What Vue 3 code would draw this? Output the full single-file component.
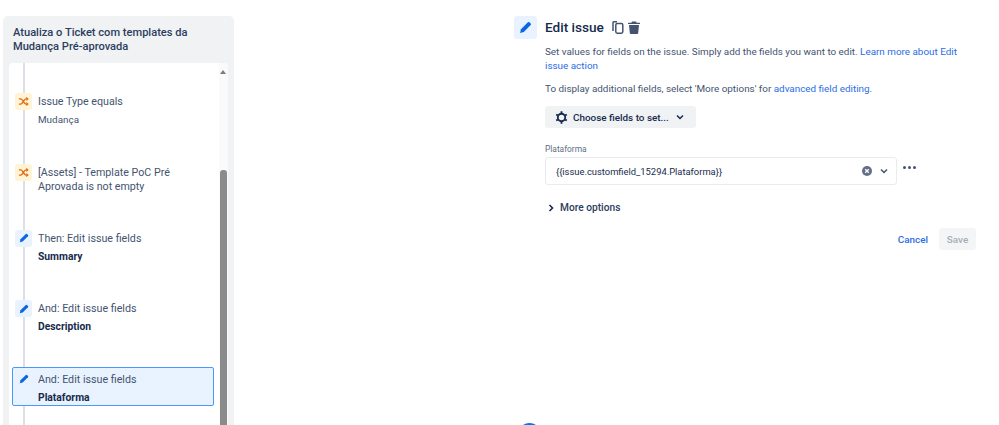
<script setup>
const fieldValue = '{' + '{issue.customfield_15294.Plataforma}' + '}'
const rules = [
  { kind: 'cond', title: 'Issue Type equals', sub: 'Mudança' },
  { kind: 'cond', title: '[Assets] - Template PoC Pré Aprovada is not empty' },
  { kind: 'edit', title: 'Then: Edit issue fields', sub: 'Summary', bold: true },
  { kind: 'edit', title: 'And: Edit issue fields', sub: 'Description', bold: true },
  { kind: 'edit', title: 'And: Edit issue fields', sub: 'Plataforma', bold: true, active: true },
]
</script>

<template>
  <div class="page">
    <aside class="side">
      <h2 class="side-title">Atualiza o Ticket com templates da Mudança Pré-aprovada</h2>
      <div class="panel">
        <div class="timeline">
          <div v-for="(r, i) in rules" :key="i" class="rule" :class="{ active: r.active, two: !r.sub }">
            <span class="badge" :class="r.kind">
              <svg v-if="r.kind === 'cond'" width="11" height="11" viewBox="0 0 12 12" fill="none" stroke="#e56910" stroke-width="1.5">
                <path d="M1 3.2h2.2c1.8 0 3.4 5.6 5.4 5.6H10M1 8.8h2.2c1.8 0 3.4-5.600 5.4-5.600H10" />
                <path d="M9 1.6l1.8 1.6L9 4.8M9 7.2l1.8 1.6L9 10.4" stroke-width="1.2" />
              </svg>
              <svg v-else width="10" height="10" viewBox="0 0 12 12" fill="#0c66e4">
                <path d="M8.2 1.2a1 1 0 0 1 1.4 0l1.2 1.2a1 1 0 0 1 0 1.4L4.4 10.2 1 11l.8-3.4z" />
              </svg>
            </span>
            <div class="rule-text">
              <div class="rule-title">{{ r.title }}</div>
              <div v-if="r.sub" class="rule-sub" :class="{ bold: r.bold }">{{ r.sub }}</div>
            </div>
          </div>
        </div>
        <div class="scrollbar">
          <span class="arrow"></span>
          <span class="thumb"></span>
        </div>
      </div>
    </aside>

    <main class="main">
      <header class="head">
        <span class="head-icon">
          <svg width="13" height="13" viewBox="0 0 12 12" fill="#0c66e4">
            <path d="M8.2 1.2a1 1 0 0 1 1.4 0l1.2 1.2a1 1 0 0 1 0 1.4L4.4 10.2 1 11l.8-3.4z" />
          </svg>
        </span>
        <h1 class="head-title">Edit issue</h1>
        <svg class="copy" width="12" height="13" viewBox="0 0 12 13" fill="none" stroke="#44546f" stroke-width="1.5">
          <path d="M1 10V1.800a1 1 0 0 1 1-1h3" />
          <rect x="3.800" y="2.600" width="7" height="9.600" rx="1.400" />
        </svg>
        <svg class="trash" width="12" height="13" viewBox="0 0 12 13" fill="#44546f">
          <path d="M4 .6h4l.6 1.200h2.900a.5.5 0 0 1 .5.5v.7H0v-.7a.5.5 0 0 1 .5-.5h2.900zM1 4h10l-.8 8a1 1 0 0 1-1 .9H2.800a1 1 0 0 1-1-.9z" />
        </svg>
      </header>

      <div class="body">
        <p class="para">Set values for fields on the issue. Simply add the fields you want to edit. <a class="link">Learn more about Edit issue action</a></p>
        <p class="para second">To display additional fields, select 'More options' for <a class="link">advanced field editing</a>.</p>

        <button class="choose">
          <svg width="13" height="13" viewBox="0 0 14 14" fill="none" stroke="#172b4d">
            <circle cx="7" cy="7" r="4" stroke-width="2" />
            <path stroke-width="2" d="M7 .4v2M7 11.600v2M1.300 3.700l1.700 1M11 9.300l1.700 1M1.300 10.300l1.700-1M11 4.700l1.700-1" />
          </svg>
          <span class="choose-text">Choose fields to set...</span>
          <svg class="chev" width="8" height="6" viewBox="0 0 8 6" fill="none" stroke="#172b4d" stroke-width="1.500"><path d="M1 1.500l3 3 3-3" /></svg>
        </button>

        <label class="label">Plataforma</label>
        <div class="field-row">
          <div class="input">
            <span class="value">{{ fieldValue }}</span>
            <svg class="clear" width="10" height="10" viewBox="0 0 10 10">
              <circle cx="5" cy="5" r="5" fill="#626f86" />
              <path d="M3.200 3.200l3.600 3.600M6.800 3.200l-3.600 3.600" stroke="#fff" stroke-width="1.300" />
            </svg>
            <svg class="chev2" width="8" height="6" viewBox="0 0 8 6" fill="none" stroke="#44546f" stroke-width="1.500"><path d="M1 1.500l3 3 3-3" /></svg>
          </div>
          <div class="dots"><i></i><i></i><i></i></div>
        </div>

        <div class="more">
          <svg width="6" height="8" viewBox="0 0 6 8" fill="none" stroke="#172b4d" stroke-width="1.600"><path d="M1.500 1l3 3-3 3" /></svg>
          <span>More options</span>
        </div>

        <div class="actions">
          <a class="cancel">Cancel</a>
          <button class="save">Save</button>
        </div>
      </div>
    </main>

    <span class="fab"></span>
  </div>
</template>

<style>
html, body { margin: 0; background: #fff; }
</style>

<style scoped>
.page {
  position: relative;
  display: flex;
  align-items: flex-start;
  width: 999px;
  height: 425px;
  overflow: hidden;
  font-family: Roboto, "Noto Sans", sans-serif;
  color: #44546f;
}
.side {
  box-sizing: border-box;
  flex: none;
  width: 231px;
  height: 420px;
  margin: 16px 0 0 3px;
  padding: 10px 6px 0;
  background: #f1f2f4;
  border-radius: 5px 5px 0 0;
}
.side-title {
  margin: 0 0 9px 4px;
  font-size: 11.100px;
  line-height: 14px;
  font-weight: 500;
  color: #2c3e5d;
}
.panel {
  display: flex;
  height: 400px;
  background: #fff;
  border-radius: 4px 4px 0 0;
  overflow: hidden;
}
.timeline {
  flex: 1;
  box-sizing: border-box;
  position: relative;
  padding: 26px 5px 0 3px;
}
.timeline::before {
  content: "";
  position: absolute;
  left: 14px;
  top: 0;
  bottom: 0;
  width: 1.500px;
  background: #dcdfe6;
}
.rule {
  position: relative;
  display: flex;
  gap: 6px;
  height: 39px;
  margin-bottom: 31.500px;
  box-sizing: border-box;
  padding: 3px 0 0 2px;
  border: 1px solid transparent;
}
.rule.two { margin-bottom: 22px; height: 44px; }
.rule.active {
  background: #e9f2ff;
  border: 1.500px solid #4a97ff;
  border-radius: 2px;
}
.badge {
  flex: none;
  display: flex;
  align-items: center;
  justify-content: center;
  width: 17px;
  height: 17px;
  border-radius: 3px;
}
.badge.cond { background: #fff4d6; }
.badge.edit { background: #e9f2ff; }
.rule-text { padding-top: 2px; }
.rule-title {
  font-size: 10.700px;
  line-height: 14px;
  color: #44546f;
}
.rule-sub {
  margin-top: 4px;
  font-size: 9.900px;
  line-height: 14px;
}
.rule-sub.bold { font-size: 10.300px; font-weight: 700; color: #172b4d; }
.scrollbar {
  flex: none;
  position: relative;
  width: 9px;
  background: #fafafa;
}
.arrow {
  position: absolute;
  left: 1px;
  top: 7px;
  border: 3.500px solid transparent;
  border-top: 0;
  border-bottom: 4px solid #7c7c7c;
}
.thumb {
  position: absolute;
  left: 1px;
  right: 1px;
  top: 107px;
  bottom: 0;
  background: #8b8b8b;
  border-radius: 3px 3px 0 0;
}
.main {
  flex: none;
  width: 462px;
  margin: 16px 0 0 280px;
}
.head {
  display: flex;
  align-items: center;
  height: 23px;
}
.head-icon {
  display: flex;
  align-items: center;
  justify-content: center;
  width: 23px;
  height: 23px;
  border-radius: 3px;
  background: #e9f2ff;
}
.head-title {
  margin: 0 8px;
  font-size: 13.600px;
  font-weight: 500;
  line-height: 23px;
  color: #172b4d;
}
.copy { margin-right: 4px; }
.body { padding: 6px 0 0 31px; }
.para {
  margin: 0;
  font-size: 9.900px;
  line-height: 14px;
  color: #44546f;
}
.para.second { margin-top: 9px; }
.link { color: #2a6de6; }
.choose {
  display: flex;
  align-items: center;
  gap: 5px;
  width: 151px;
  height: 22px;
  margin-top: 10px;
  padding: 0 0 0 10px;
  border: 0;
  border-radius: 3px;
  background: #f1f2f4;
  font: 500 9.900px Roboto, "Noto Sans", sans-serif;
  color: #172b4d;
}
.choose-text { white-space: nowrap; }
.chev { margin-left: 2px; }
.label {
  display: block;
  margin-top: 15px;
  font-size: 8.400px;
  line-height: 12px;
  color: #626f86;
}
.field-row {
  display: flex;
  margin-top: 2px;
}
.input {
  box-sizing: border-box;
  display: flex;
  align-items: center;
  width: 352px;
  height: 28px;
  padding: 0 8px 0 10px;
  border: 1.500px solid #e9ebee;
  border-radius: 3px;
}
.value {
  flex: 1;
  font-size: 9.400px;
  color: #172b4d;
}
.chev2 { margin-left: 8px; }
.dots {
  display: flex;
  gap: 2px;
  margin: 9px 0 0 6px;
}
.dots i {
  width: 3px;
  height: 3px;
  border-radius: 50%;
  background: #44546f;
}
.more {
  display: flex;
  align-items: center;
  gap: 6px;
  margin-top: 16px;
  padding-left: 3px;
  font-size: 10.200px;
  font-weight: 500;
  line-height: 14px;
  color: #2c3e5d;
}
.actions {
  display: flex;
  align-items: center;
  justify-content: flex-end;
  gap: 11px;
  margin-top: 13px;
}
.cancel {
  font-size: 9.900px;
  font-weight: 500;
  color: #2a6de6;
}
.save {
  width: 37px;
  height: 22px;
  padding: 0;
  border: 0;
  border-radius: 3px;
  background: #f4f5f7;
  font: 500 9.900px Roboto, "Noto Sans", sans-serif;
  color: #a5adba;
}
.fab {
  position: absolute;
  left: 518px;
  top: 423px;
  width: 23px;
  height: 23px;
  border-radius: 50%;
  background: #0c72ee;
}
</style>
